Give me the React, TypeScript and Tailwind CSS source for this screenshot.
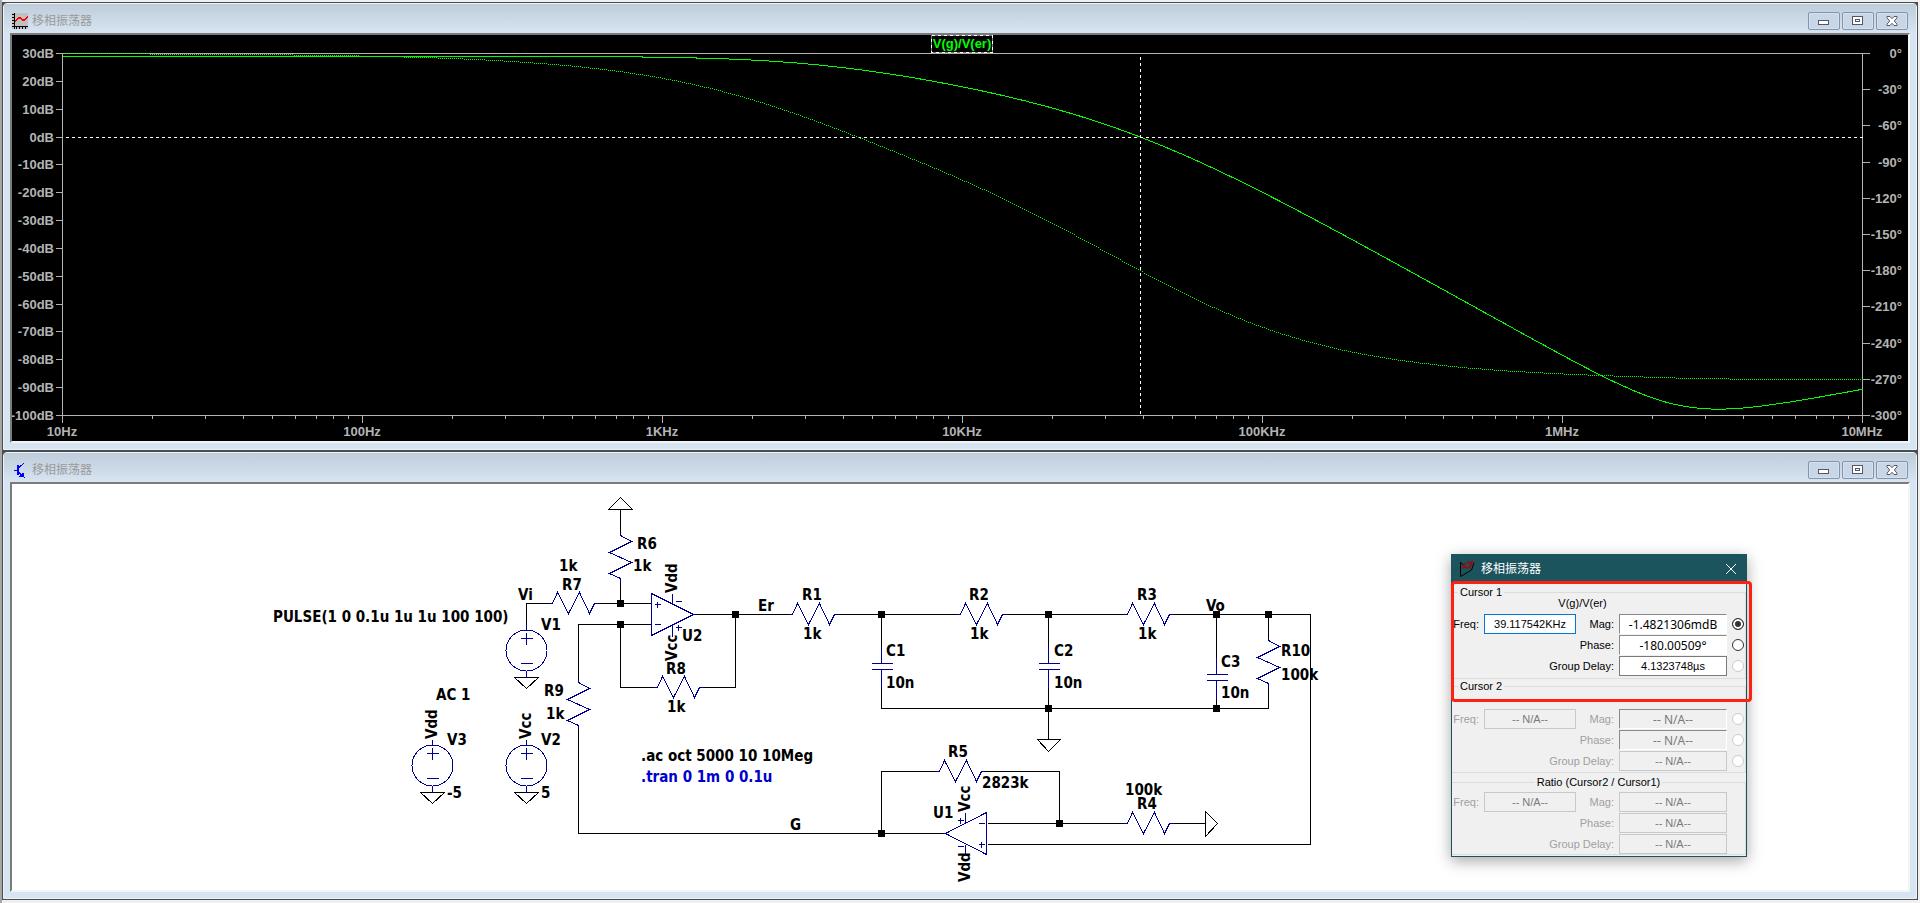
import type { ReactNode } from 'react';

const TITLE = '移相振荡器';

/* ---------- window chrome ---------- */

function MinimizeIcon() {
  return (
    <svg width="12" height="10" viewBox="0 0 12 10" shapeRendering="crispEdges">
      <rect x="0.500" y="4.500" width="10" height="4" fill="#fff" stroke="#535666" />
    </svg>
  );
}

function MaximizeIcon() {
  return (
    <svg width="12" height="10" viewBox="0 0 12 10" shapeRendering="crispEdges">
      <rect x="0.500" y="0.500" width="10" height="8" fill="#fff" stroke="#535666" />
      <rect x="3.500" y="3.500" width="4" height="2" fill="#fff" stroke="#535666" />
    </svg>
  );
}

function CloseIcon() {
  return (
    <svg width="12" height="10" viewBox="0 0 12 10">
      <path
        d="M1 .5h3l2 2.200L8 .5h3v1.300L8.300 5 11 8.200v1.300H8L6 7.300 4 9.500H1V8.200L3.700 5 1 1.800z"
        fill="#fff"
        stroke="#535666"
      />
    </svg>
  );
}

function PlotIcon() {
  return (
    <svg width="16" height="16" viewBox="0 0 16 16" shapeRendering="crispEdges">
      <rect width="16" height="16" fill="#c0c0c0" />
      <path d="M2.500 0v16M0 13.500h16" stroke="#000" />
      <path
        d="M0 1.500h2M0 4.500h2M0 7.500h2M0 10.500h2M4.500 14v2M7.500 14v2M10.500 14v2M13.500 14v2"
        stroke="#000"
      />
      <path d="M3 8.500L6.500 5h2l2 2h2L16 3.500" stroke="#f00" strokeWidth="1.600" fill="none" />
    </svg>
  );
}

function TransistorIcon() {
  return (
    <svg width="16" height="16" viewBox="0 0 16 16" stroke="#00f" fill="none" shapeRendering="crispEdges">
      <path d="M2 8.500h3M7 5.500L12 1M7 10.500l6 5.500" />
      <path d="M6 3v10" strokeWidth="2" />
      <path d="M8 14.500l4 .500-1-4z" fill="#00f" />
    </svg>
  );
}

const captionButtons = [
  { label: 'Minimize', icon: <MinimizeIcon /> },
  { label: 'Maximize', icon: <MaximizeIcon /> },
  { label: 'Close', icon: <CloseIcon /> },
];

interface MdiWindowProps {
  icon: ReactNode;
  children: ReactNode;
}

function MdiWindow({ icon, children }: MdiWindowProps) {
  return (
    <section className="border border-[#4a4d50] bg-[#4a4d50]">
      <div className="rounded-t-sm border border-[#eef3f9] bg-[#d7e4f2] pb-[6px]">
        <header className="flex h-[29px] items-center gap-1 bg-gradient-to-b from-[#bfccd9] to-[#d7e4f2] pt-[5px] pr-2 pl-2">
          {icon}
          <h2 className="flex-1 text-[12px] leading-4 text-[#9a9a9a]">{TITLE}</h2>
          <div className="flex gap-[2px]">
            {captionButtons.map(({ label, icon: glyph }) => (
              <button
                key={label}
                type="button"
                aria-label={label}
                className="flex h-[18px] w-8 items-center justify-center rounded-[2px] border border-[#8393ad] bg-[#c8d6e6] shadow-[inset_0_0_0_1px_#d5e1ef]"
              >
                {glyph}
              </button>
            ))}
          </div>
        </header>
        <div className="relative mx-[6px] border-2 border-t-[#7b7b7b] border-r-[#f4f4f4] border-b-[#f4f4f4] border-l-[#7b7b7b]">
          {children}
        </div>
      </div>
    </section>
  );
}

/* ---------- bode plot ---------- */

const PLOT = { left: 62, right: 1862, top: 53, bottom: 415 };
const DECADES = 6;

const freqToX = (f: number) =>
  PLOT.left + (Math.log10(f / 10) / DECADES) * (PLOT.right - PLOT.left);
const dbToY = (db: number) => PLOT.top + ((30 - db) / 130) * (PLOT.bottom - PLOT.top);
const degToY = (deg: number) => PLOT.top + (-deg / 300) * (PLOT.bottom - PLOT.top);

// Three RC sections (1k / 10n) loaded by 100k, then a 1 + 2823k/100k stage.
function response(f: number) {
  const w = 2 * Math.PI * f * 1e-5;
  const re = 1.03 - 5.01 * w * w;
  const im = 6.04 * w - w * w * w;
  const d = re * re + im * im;
  const hr = (29.23 * re) / d;
  const hi = (-29.23 * im) / d + 4.69e-8 * w;
  let deg = (Math.atan2(hi, hr) * 180) / Math.PI;
  if (deg > 0.01) deg -= 360;
  return { db: 20 * Math.log10(Math.hypot(hr, hi)), deg };
}

const samples = Array.from({ length: 901 }, (_, i) => {
  const f = 10 * 10 ** (i / 150);
  return { x: PLOT.left + i * 2, ...response(f) };
});
const gainLine = samples.map((s) => `${s.x},${dbToY(s.db).toFixed(1)}`).join(' ');
// one dot every second pixel column
const phaseDots = samples.map((s) => `M${s.x} ${Math.round(degToY(s.deg))}h1`).join('');

const dbTicks = Array.from({ length: 14 }, (_, i) => 30 - i * 10);
const degTicks = Array.from({ length: 11 }, (_, i) => -i * 30);
const freqLabels = ['10Hz', '100Hz', '1KHz', '10KHz', '100KHz', '1MHz', '10MHz'];

function BodePlot() {
  return (
    <svg
      viewBox="12 35 1896 406"
      className="block h-auto w-full bg-black font-['Liberation_Sans',sans-serif] text-[13px] font-bold"
    >
      <g transform="translate(0.5 0.5)" stroke="#b4b4b4" fill="none" shapeRendering="crispEdges">
        <rect
          x={PLOT.left}
          y={PLOT.top}
          width={PLOT.right - PLOT.left}
          height={PLOT.bottom - PLOT.top}
        />
        {dbTicks.map((db) => {
          const y = Math.round(dbToY(db));
          return <path key={db} d={`M${PLOT.left - 7} ${y}h7`} />;
        })}
        {degTicks.map((deg) => {
          const y = Math.round(degToY(deg));
          return <path key={deg} d={`M${PLOT.right} ${y}h7`} />;
        })}
        {freqLabels.map((label, i) => {
          const f = 10 ** (i + 1);
          return (
            <g key={label}>
              <path d={`M${Math.round(freqToX(f))} ${PLOT.bottom}v7`} />
              {i < DECADES &&
                [2, 3, 4, 5, 6, 7, 8, 9].map((n) => (
                  <path key={n} d={`M${Math.round(freqToX(f * n))} ${PLOT.bottom}v3`} />
                ))}
            </g>
          );
        })}
        <polyline points={gainLine} stroke="#00ff00" />
        <path d="M65 137H1862M1140 56V415" stroke="#fff" strokeDasharray="3 3" />
        <rect x="931" y="35" width="61" height="17" stroke="#7a7a7a" />
        <rect x="931" y="35" width="61" height="17" stroke="#fff" strokeDasharray="3 3" />
      </g>
      <path
        d={phaseDots}
        transform="translate(0 0.5)"
        stroke="#00ff00"
        shapeRendering="crispEdges"
      />
      <text x="962" y="48" textAnchor="middle" fill="#00ff00">
        V(g)/V(er)
      </text>
      <g fill="#b4b4b4">
        {dbTicks.map((db) => (
          <text key={db} x="54" y={Math.round(dbToY(db)) + 5} textAnchor="end">
            {db}dB
          </text>
        ))}
        {degTicks.map((deg) => (
          <text key={deg} x="1902" y={Math.round(degToY(deg)) + 5} textAnchor="end">
            {deg === 0 ? 0 : deg}°
          </text>
        ))}
        {freqLabels.map((label, i) => (
          <text key={label} x={62 + i * 300} y="436" textAnchor="middle">
            {label}
          </text>
        ))}
      </g>
    </svg>
  );
}

/* ---------- schematic ---------- */

const hResistors = [
  [788, 614],
  [956, 614],
  [1123, 614],
  [548, 603],
  [653, 687],
  [935, 771],
  [1123, 823],
];
const vResistors = [
  [620, 532],
  [1268, 637],
  [578, 679],
];
const capacitors = [
  [881, 663],
  [1048, 663],
  [1216, 674],
];
const sources = [
  [526, 650],
  [432, 765],
  [526, 765],
];
const junctions = [
  [620, 603],
  [620, 624],
  [735, 614],
  [881, 614],
  [1048, 614],
  [1216, 614],
  [1268, 614],
  [1048, 708],
  [1216, 708],
  [1059, 823],
  [881, 833],
];

const wires = [
  'M620 509V532M620 582V603',
  'M526 629V603H548M598 603H651',
  'M651 624H578V679M578 729V833H945',
  'M620 624V687H653M703 687H735V614',
  'M693 614H788M838 614H956M1006 614H1123M1173 614H1310V844H987',
  'M881 614V646M881 687V708H1268V687M1268 614V637',
  'M1048 614V646M1048 687V739',
  'M1216 614V657M1216 698V708',
  'M881 833V771H935M985 771H1059V823',
  'M987 823H1123M1173 823H1205',
];

const grounds = [
  'M608 509H632L620 497Z',
  'M514 677H538L526 688Z',
  'M420 792H444L432 803Z',
  'M514 792H538L526 803Z',
  'M1037 739H1060L1048 751Z',
  'M1205 811V836L1217 823Z',
];

const labels: [string, number, number][] = [
  ['Vi', 518, 600],
  ['PULSE(1 0 0.1u 1u 1u 100 100)', 273, 622],
  ['V1', 541, 630],
  ['AC 1', 436, 700],
  ['V3', 447, 745],
  ['V2', 541, 745],
  ['-5', 447, 798],
  ['5', 541, 798],
  ['R9', 544, 696],
  ['1k', 546, 719],
  ['R7', 562, 590],
  ['1k', 559, 571],
  ['R6', 637, 549],
  ['1k', 633, 571],
  ['U2', 682, 641],
  ['Er', 758, 611],
  ['R8', 666, 674],
  ['1k', 667, 712],
  ['R1', 802, 600],
  ['1k', 803, 639],
  ['C1', 886, 656],
  ['10n', 886, 688],
  ['R2', 969, 600],
  ['1k', 970, 639],
  ['C2', 1054, 656],
  ['10n', 1054, 688],
  ['R3', 1137, 600],
  ['1k', 1138, 639],
  ['Vo', 1206, 611],
  ['C3', 1221, 667],
  ['10n', 1221, 698],
  ['R10', 1281, 656],
  ['100k', 1281, 680],
  ['R5', 948, 757],
  ['2823k', 982, 788],
  ['100k', 1125, 795],
  ['R4', 1137, 809],
  ['U1', 933, 818],
  ['G', 790, 830],
  ['.ac oct 5000 10 10Meg', 641, 761],
];

const railLabels: [string, number, number][] = [
  ['Vdd', 437, 739],
  ['Vcc', 531, 739],
  ['Vdd', 677, 593],
  ['Vcc', 677, 661],
  ['Vcc', 970, 812],
  ['Vdd', 970, 882],
];

function Schematic() {
  return (
    <svg
      viewBox="12 484 1896 406"
      className="block h-auto w-full bg-white font-['DejaVu_Sans_Condensed','Noto_Sans',sans-serif] text-[15px] font-bold"
    >
      <g transform="translate(0.5 0.5)" fill="none" shapeRendering="crispEdges">
        <g stroke="#000">
          {[...wires, ...grounds].map((d) => (
            <path key={d} d={d} />
          ))}
        </g>
        <g stroke="#000090">
          {hResistors.map(([x, y]) => (
            <path key={`${x}-${y}`} d={`M${x} ${y}h4l5 -11l11 21l11 -21l10 21l5 -10h4`} />
          ))}
          {vResistors.map(([x, y]) => (
            <path key={`${x}-${y}`} d={`M${x} ${y}v3l11 6l-22 11l22 10l-22 11l11 5v4`} />
          ))}
          {capacitors.map(([x, y]) => (
            <path key={x} d={`M${x} ${y - 17}v17M${x - 10} ${y}h21M${x - 10} ${y + 6}h21M${x} ${y + 6}v18`} />
          ))}
          {sources.map(([x, y]) => (
            <g key={`${x}-${y}`}>
              <circle cx={x} cy={y} r="20.500" />
              <path d={`M${x} ${y - 26}v6M${x} ${y + 20}v7M${x - 6} ${y - 12}h12M${x} ${y - 18}v12M${x - 6} ${y + 13}h12`} />
            </g>
          ))}
          {/* U2 */}
          <path d="M651 593V635L693 614ZM654 604h6M657 601v6M654 624h6M672 593v11M672 624v12M675 601h6M675 627h6M678 624v6" />
          {/* U1 */}
          <path d="M986 812V854L945 833ZM978 823h6M978 844h6M981 841v6M965 812v11M965 844v10M957 820h6M960 817v6M957 846h6" />
        </g>
      </g>
      {junctions.map(([x, y]) => (
        <rect key={`${x}-${y}`} x={x - 3} y={y - 3} width="7" height="7" />
      ))}
      {labels.map(([text, x, y]) => (
        <text key={`${x}-${y}`} x={x} y={y}>
          {text}
        </text>
      ))}
      <text x="641" y="782" fill="#0000cd">
        .tran 0 1m 0 0.1u
      </text>
      {railLabels.map(([text, x, y]) => (
        <text key={`${x}-${y}`} transform={`translate(${x} ${y}) rotate(-90)`}>
          {text}
        </text>
      ))}
    </svg>
  );
}

/* ---------- cursor dialog ---------- */

const NA = '-- N/A--';

interface ReadoutProps {
  id: string;
  freq: string;
  values: string[];
  disabled?: boolean;
  radios?: boolean;
}

function Readout({ id, freq, values, disabled = false, radios = true }: ReadoutProps) {
  const labelColor = disabled ? 'text-[#a0a0a0]' : 'text-black';

  return (
    <div className="grid grid-cols-[24px_92px_33px_108px_12px] gap-x-[5px] gap-y-px pl-[3px]">
      {['Mag:', 'Phase:', 'Group Delay:'].map((name, i) => {
        const valueId = `${id}-value-${i}`;
        const wide = radios && i < 2;
        return (
          <div key={name} className="col-span-5 grid h-5 grid-cols-subgrid items-center">
            {i === 0 && (
              <>
                <label htmlFor={`${id}-freq`} className={`flex justify-end ${labelColor}`}>
                  Freq:
                </label>
                <input
                  id={`${id}-freq`}
                  defaultValue={freq}
                  disabled={disabled}
                  className="h-5 w-full border border-[#0078d7] bg-white text-center disabled:border-[#c8c8c8] disabled:bg-[#f0f0f0] disabled:text-[#7a7a7a]"
                />
              </>
            )}
            <label
              htmlFor={valueId}
              className={`text-right whitespace-nowrap ${labelColor} ${i === 0 ? '' : 'col-span-3'}`}
            >
              {name}
            </label>
            <input
              id={valueId}
              readOnly
              value={values[i]}
              disabled={disabled}
              className={`h-5 w-full border bg-white text-center disabled:bg-[#f0f0f0] disabled:text-[#7a7a7a] ${
                wide
                  ? "border-t-[#8a8a8a] border-r-white border-b-white border-l-[#8a8a8a] font-['Noto_Sans',sans-serif] text-[12px]"
                  : 'border-[#7a7a7a] disabled:border-[#c8c8c8]'
              }`}
            />
            {radios && (
              <input
                type="radio"
                name={id}
                aria-label={name}
                defaultChecked={!disabled && i === 0}
                disabled={disabled || i === 2}
                className="h-3 w-3 appearance-none rounded-full border border-[#333] bg-white checked:bg-[#333] checked:shadow-[inset_0_0_0_2px_#fff] disabled:border-[#ccc]"
              />
            )}
          </div>
        );
      })}
    </div>
  );
}

function CursorDialog() {
  return (
    <div
      role="dialog"
      aria-label={TITLE}
      className="absolute top-[70px] right-[161px] w-[296px] border border-[#1c545e] bg-[#f0f0f0] pb-px font-['Liberation_Sans',sans-serif] text-[11px] leading-[14px] text-black shadow-[0_4px_14px_rgba(0,0,0,0.35)]"
    >
      <header className="flex h-7 items-center gap-[6px] bg-[#1c545e] pr-[9px] pl-[7px]">
        <svg width="16" height="16" viewBox="0 0 16 16" fill="none">
          <path d="M4 4L1.500 1v14.500L12.500 9 15 2" stroke="#000" />
          <path d="M6 2L4 6.500h5M7.500 1.500h8M12.500 1.500L10 7.500" stroke="#8b0f14" strokeWidth="2" />
        </svg>
        <h2 className="flex-1 font-['Liberation_Sans','Noto_Sans_CJK_SC',sans-serif] text-[12px] text-white">
          {TITLE}
        </h2>
        <button type="button" aria-label="Close">
          <svg width="12" height="12" viewBox="0 0 12 12" stroke="#fff">
            <path d="M1 1l10 10M11 1L1 11" />
          </svg>
        </button>
      </header>

      <fieldset className="mt-[2px] h-[94px] border border-l-0 border-[#dcdcdc]">
        <legend className="ml-[6px] px-[2px]">Cursor 1</legend>
        <p className="-mt-[3px] mb-1 pr-8 text-center">V(g)/V(er)</p>
        <Readout
          id="cursor1"
          freq="39.117542KHz"
          values={['-1.4821306mdB', '-180.00509°', '4.1323748µs']}
        />
      </fieldset>

      <fieldset className="h-[94px] border border-l-0 border-[#dcdcdc]">
        <legend className="ml-[6px] px-[2px]">Cursor 2</legend>
        <div className="mt-4">
          <Readout id="cursor2" freq={NA} values={[NA, NA, NA]} disabled />
        </div>
      </fieldset>

      <fieldset className="mt-[2px] border border-l-0 border-[#dcdcdc]">
        <legend className="mx-auto px-[2px]">Ratio (Cursor2 / Cursor1)</legend>
        <div className="mt-[3px]">
          <Readout id="ratio" freq={NA} values={[NA, NA, NA]} disabled radios={false} />
        </div>
      </fieldset>

      {/* highlight around the first cursor */}
      <div className="pointer-events-none absolute top-[26px] -right-[6px] -left-px h-[121px] rounded-[4px] border-[3px] border-[#ff2014]" />
    </div>
  );
}

export default function App() {
  return (
    <main className="min-h-screen border-l-2 border-[#a6a6a6] bg-[#f0f0f0] py-[2px] pr-[2px] font-['Liberation_Sans','Noto_Sans_CJK_SC',sans-serif]">
      <MdiWindow icon={<PlotIcon />}>
        <BodePlot />
      </MdiWindow>
      <MdiWindow icon={<TransistorIcon />}>
        <Schematic />
        <CursorDialog />
      </MdiWindow>
    </main>
  );
}
